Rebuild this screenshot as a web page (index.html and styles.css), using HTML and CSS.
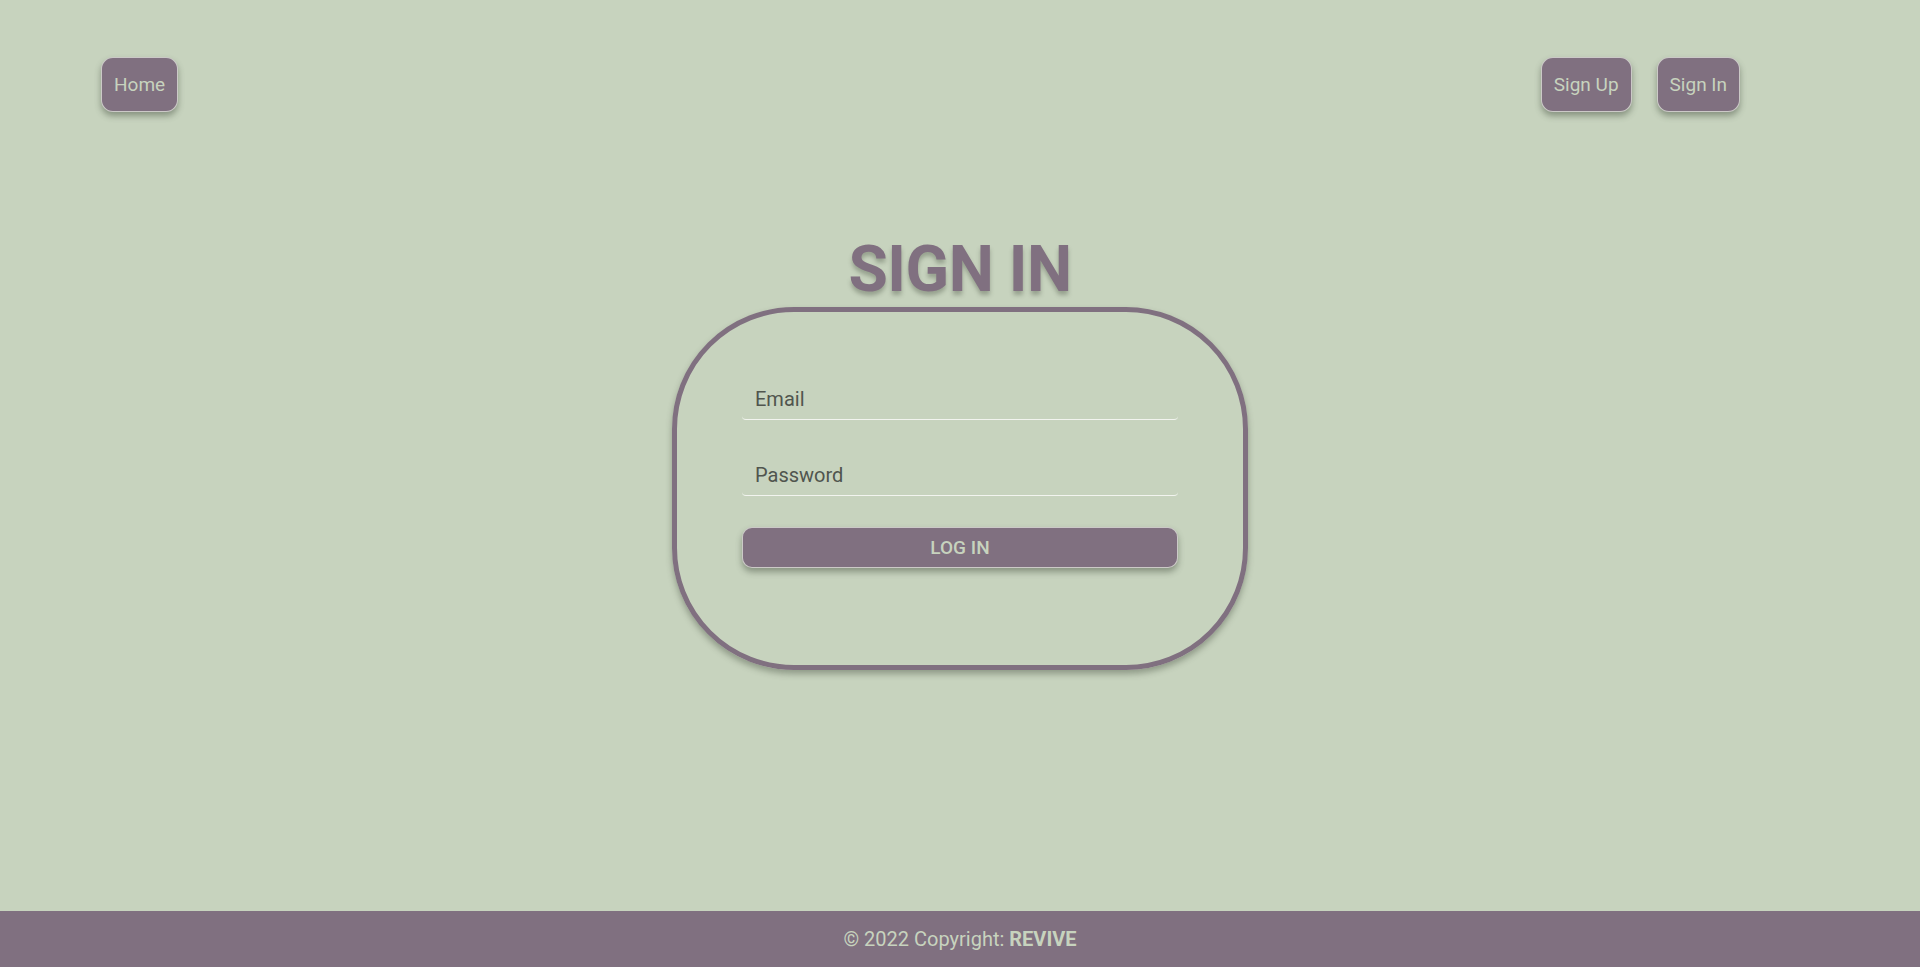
FILE: index.html
```html
<!DOCTYPE html>
<html lang="en">
<head>
<meta charset="utf-8">
<title>Sign In - REVIVE</title>
<link rel="stylesheet" href="styles.css">
</head>
<body>
  <nav class="nav">
    <a class="nav-btn" href="#">Home</a>
    <div class="nav-right">
      <a class="nav-btn" href="#">Sign Up</a>
      <a class="nav-btn" href="#">Sign In</a>
    </div>
  </nav>
  <main class="main">
    <h1 class="title">SIGN IN</h1>
    <form class="card">
      <label class="field"><input class="input" type="email" placeholder="Email"></label>
      <label class="field"><input class="input" type="password" placeholder="Password"></label>
      <button class="login" type="button">LOG IN</button>
    </form>
  </main>
  <footer class="footer">© 2022 Copyright: <strong>REVIVE</strong></footer>
</body>
</html>
```
FILE: styles.css
```css
* { box-sizing: border-box; }
html, body { margin: 0; padding: 0; }
body {
  background: #c7d3be;
  font-family: Roboto, "Liberation Sans", sans-serif;
  min-height: 100vh;
  display: flex;
  flex-direction: column;
}
.nav {
  display: flex;
  justify-content: space-between;
  align-items: flex-start;
  padding: 57px 180px 0 101px;
}
.nav-right { display: flex; gap: 25px; }
.nav-btn {
  display: flex;
  align-items: center;
  height: 55px;
  padding: 0 12px;
  background: #807080;
  color: #c7d3be;
  font-size: 19px;
  text-decoration: none;
  border: 1px solid rgba(235, 240, 230, 0.7);
  border-radius: 12px;
  box-shadow: 0 4px 6px rgba(60, 70, 55, 0.45);
}
.main {
  display: flex;
  flex-direction: column;
  align-items: center;
  padding-top: 121px;
}
.title {
  margin: 0;
  font-size: 64px;
  line-height: 74px;
  font-weight: 700;
  letter-spacing: -0.5px;
  color: #807080;
  text-shadow: 0 4px 4px rgba(60, 70, 55, 0.35);
}
.card {
  width: 576px;
  border: 5px solid #807080;
  border-radius: 122px;
  padding: 67px 65px 97px;
  display: flex;
  flex-direction: column;
  box-shadow: 0 4px 6px rgba(60, 70, 55, 0.4);
}
.field {
  display: block;
  border-bottom: 1px solid #f2f4ef;
  border-radius: 0 0 4px 4px;
  margin-bottom: 35px;
}
.field + .field { margin-bottom: 31px; }
.input {
  display: block;
  width: 100%;
  height: 40px;
  border: 0;
  background: transparent;
  padding: 0 13px;
  font-family: Roboto, "Liberation Sans", sans-serif;
  font-size: 20px;
  color: #4b5249;
  outline: none;
}
.input::placeholder { color: #50554e; opacity: 1; }
.login {
  height: 41px;
  background: #807080;
  color: #c7d3be;
  font-family: Roboto, "Liberation Sans", sans-serif;
  font-size: 19px;
  font-weight: 500;
  border: 1px solid rgba(235, 240, 230, 0.7);
  border-radius: 10px;
  box-shadow: 0 4px 6px rgba(60, 70, 55, 0.45);
  cursor: pointer;
}
.footer {
  margin-top: auto;
  height: 56px;
  line-height: 56px;
  background: #807080;
  color: #c7d3be;
  text-align: center;
  font-size: 20px;
}
.footer strong { font-weight: 700; }
```
